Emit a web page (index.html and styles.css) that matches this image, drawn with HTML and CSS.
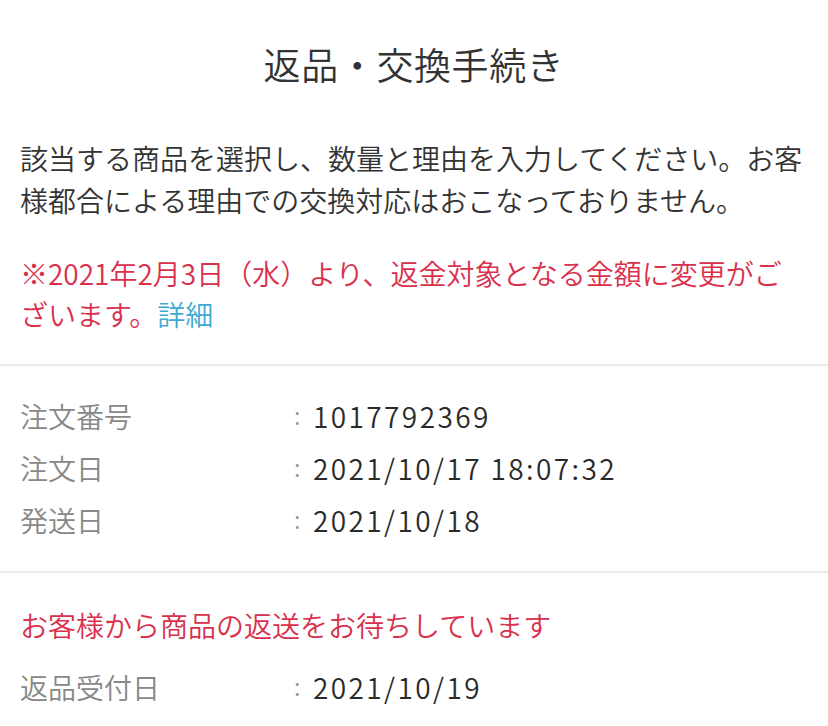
FILE: index.html
```html
<!DOCTYPE html>
<html lang="ja">
<head>
<meta charset="utf-8">
<title>返品・交換手続き</title>
<link rel="stylesheet" href="styles.css">
</head>
<body>
<main class="page">
  <section class="intro">
    <h1 class="title">返品・交換手続き</h1>
    <p class="lead">該当する商品を選択し、数量と理由を入力してください。お客様都合による理由での交換対応はおこなっておりません。</p>
    <p class="notice">※2021年2月3日（水）より、返金対象となる金額に変更がございます。<a class="link" href="#">詳細</a></p>
  </section>
  <section class="info">
    <dl class="rows">
      <div class="row"><dt class="label">注文番号</dt><dd class="value"><span class="colon">:</span><span class="num">1017792369</span></dd></div>
      <div class="row"><dt class="label">注文日</dt><dd class="value"><span class="colon">:</span><span class="num">2021/10/17 18:07:32</span></dd></div>
      <div class="row"><dt class="label">発送日</dt><dd class="value"><span class="colon">:</span><span class="num">2021/10/18</span></dd></div>
    </dl>
  </section>
  <section class="status">
    <p class="status-title">お客様から商品の返送をお待ちしています</p>
    <dl class="rows">
      <div class="row"><dt class="label">返品受付日</dt><dd class="value"><span class="colon">:</span><span class="num">2021/10/19</span></dd></div>
    </dl>
  </section>
</main>
</body>
</html>
```
FILE: styles.css
```css
html, body {
  margin: 0;
  padding: 0;
  background: #ffffff;
}
body {
  font-family: "Noto Sans CJK JP", "Noto Sans", sans-serif;
  font-weight: 350;
  color: #333333;
  width: 828px;
  overflow: hidden;
}
.page {
  display: flex;
  flex-direction: column;
}
.intro {
  padding: 40px 20px 29px;
  border-bottom: 2px solid #ebebeb;
}
.title {
  margin: 0;
  font-size: 37px;
  font-weight: 350;
  line-height: 48px;
  text-align: center;
  letter-spacing: 0.6px;
  color: #333333;
}
.lead {
  margin: 49px 0 0;
  font-size: 28px;
  line-height: 42px;
  color: #333333;
}
.notice {
  margin: 32px 0 0;
  font-size: 28px;
  line-height: 41px;
  color: #d9304c;
}
.link {
  color: #3fa9d3;
  text-decoration: none;
}
.info {
  padding: 24px 20px 25px;
  border-bottom: 2px solid #ebebeb;
}
.rows {
  margin: 0;
  display: flex;
  flex-direction: column;
}
.row {
  display: grid;
  grid-template-columns: 274px 1fr;
  height: 52px;
  align-items: center;
}
.label {
  margin: 0;
  font-size: 28px;
  color: #888888;
}
.value {
  margin: 0;
  display: flex;
  align-items: center;
  font-size: 28px;
  color: #2a2a2a;
}
.colon {
  color: #999999;
  font-size: 24px;
  width: 19px;
  position: relative;
  top: -2px;
}
.num {
  letter-spacing: 2.4px;
}
.status {
  padding: 26px 20px 0;
}
.status-title {
  margin: 0 0 10px;
  font-size: 28px;
  line-height: 52px;
  color: #d9304c;
}
```
